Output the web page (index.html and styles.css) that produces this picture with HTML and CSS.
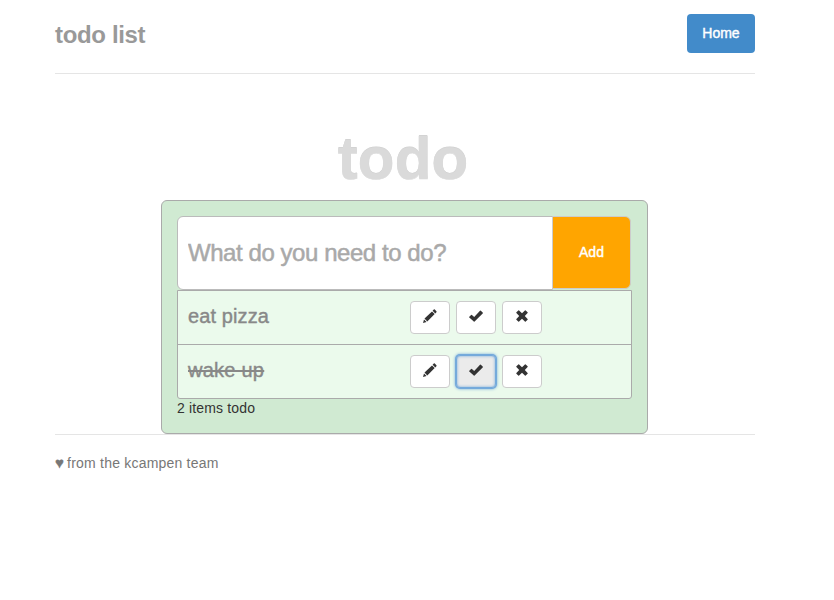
FILE: index.html
```html
<!DOCTYPE html>
<html lang="en">
<head>
<meta charset="utf-8">
<title>todo list</title>
<link rel="stylesheet" href="styles.css">
</head>
<body>
<svg width="0" height="0" class="sprite" aria-hidden="true">
  <symbol id="pencil" viewBox="0 0 14 14"><path d="M0 14l1-3.600 2.600 2.600zM1.500 9.600L9 2.400l2.700 2.600-7.400 7.400zM9.600 1.800l1.200-1.200q.5-.5 1 0l1.600 1.600q.5.5 0 1L12.300 4.400z"/></symbol>
  <symbol id="check" viewBox="0 0 14 12"><path d="M.3 6.800l1.800-1.800q.4-.4.8 0l2.300 2L11 .700q.4-.4.8 0l1.900 1.900q.4.4 0 .8l-8.100 8.100q-.4.4-.8 0L.3 7.600q-.4-.4 0-.8z"/></symbol>
  <symbol id="cross" viewBox="0 0 12 12"><path d="M3.100.4L6 3.200 8.900.4q.4-.4.8 0l1.900 1.900q.4.4 0 .8L8.800 6l2.800 2.900q.4.4 0 .8l-1.900 1.900q-.4.4-.8 0L6 8.800l-2.900 2.800q-.4.4-.8 0L.4 9.700q-.4-.4 0-.8L3.200 6 .4 3.100q-.4-.4 0-.8L2.300.4q.4-.4.8 0z"/></symbol>
</svg>
<div class="container">
  <header class="header">
    <h3 class="brand">todo list</h3>
    <a class="home">Home</a>
  </header>
  <main>
    <h1 class="title">todo</h1>
    <section class="panel">
      <form class="new-item">
        <input class="field" type="text" placeholder="What do you need to do?">
        <button class="add" type="button">Add</button>
      </form>
      <ul class="items">
        <li class="item">
          <span class="label">eat pizza</span>
          <button class="btn" type="button" aria-label="Edit"><svg width="14" height="14"><use href="#pencil"/></svg></button>
          <button class="btn" type="button" aria-label="Done"><svg width="14" height="12"><use href="#check"/></svg></button>
          <button class="btn" type="button" aria-label="Remove"><svg width="12" height="12"><use href="#cross"/></svg></button>
        </li>
        <li class="item">
          <span class="label done">wake up</span>
          <button class="btn" type="button" aria-label="Edit"><svg width="14" height="14"><use href="#pencil"/></svg></button>
          <button class="btn focused" type="button" aria-label="Done"><svg width="14" height="12"><use href="#check"/></svg></button>
          <button class="btn" type="button" aria-label="Remove"><svg width="12" height="12"><use href="#cross"/></svg></button>
        </li>
      </ul>
      <p class="count">2 items todo</p>
    </section>
  </main>
  <footer class="footer"><span class="heart">♥</span> from the kcampen team</footer>
</div>
</body>
</html>
```
FILE: styles.css
```css
* { box-sizing: border-box; }
body {
  margin: 0;
  background: #fff;
  color: #333;
  font: 14px/20px "Liberation Sans", Arial, sans-serif;
}
.sprite { position: absolute; }
.container { width: 700px; margin-left: 55px; }
.header {
  display: flex;
  justify-content: space-between;
  align-items: flex-start;
  height: 74px;
  padding-top: 14px;
  border-bottom: 1px solid #e5e5e5;
}
.brand {
  margin: 1px 0 0;
  color: #999;
  font-size: 24px;
  line-height: 40px;
  letter-spacing: -0.35px;
}
.home {
  width: 68px;
  height: 39px;
  border-radius: 4px;
  background: #428bca;
  color: #fff;
  line-height: 38px;
  text-align: center;
  -webkit-text-stroke: 0.4px #fff;
}
.title {
  margin: 50px 0 0;
  padding-right: 4px;
  height: 76px;
  color: #dadada;
  font-size: 60px;
  line-height: 70px;
  letter-spacing: 0.2px;
  text-align: center;
  text-shadow: 0 -1px 0 #d0d0d0;
  -webkit-text-stroke: 0.6px #dadada;
}
.panel {
  width: 487px;
  height: 234px;
  margin-left: 106px;
  padding: 15px;
  border: 1px solid #aaa;
  border-radius: 6px;
  background: #d0ead2;
}
.new-item { display: flex; align-items: flex-start; margin: 0; height: 74px; }
.field {
  width: 376px;
  height: 74px;
  padding: 0 10px;
  border: 1px solid #bbb;
  border-radius: 6px 0 0 6px;
  background: #fff;
  font: 24px "Liberation Sans", Arial, sans-serif;
  letter-spacing: -0.44px;
}
.field::placeholder { color: #a9a9a9; -webkit-text-stroke: 0.5px #a9a9a9; }
.add {
  width: 79px;
  height: 73px;
  margin-left: -1px;
  padding: 0 0 2px;
  border: 1px solid #ccc;
  border-radius: 0 6px 6px 0;
  background: orange;
  color: #fff;
  font: 14px "Liberation Sans", Arial, sans-serif;
  -webkit-text-stroke: 0.4px #fff;
}
.items {
  width: 455px;
  margin: 0;
  padding: 0;
  border: 1px solid #aaa;
  border-radius: 0 0 3px 3px;
  background: #ebfaec;
  list-style: none;
}
.item { display: flex; gap: 6px; height: 53px; padding: 10px; }
.item + .item { height: 54px; border-top: 1px solid #aaa; }
.label {
  width: 216px;
  color: #888;
  font-size: 20px;
  line-height: 31px;
  letter-spacing: 0.1px;
  -webkit-text-stroke: 0.4px #888;
}
.done { letter-spacing: 0.25px; text-decoration: line-through 2px; }
.btn {
  display: flex;
  justify-content: center;
  align-items: center;
  width: 40px;
  height: 33px;
  padding: 0 0 3px;
  border: 1px solid #ccc;
  border-radius: 4px;
  background: #fff;
  color: #333;
}
.btn svg { fill: currentColor; }
.focused {
  border-color: #75aadb;
  background: #ebebeb;
  box-shadow: 0 0 0 1px #75aadb, 0 0 3px 1px #75aadb, inset 0 0 3px #75aadb;
}
.count { margin: 0; line-height: 19px; letter-spacing: 0.16px; }
.footer {
  height: 50px;
  padding-top: 18px;
  border-top: 1px solid #e5e5e5;
  color: #777;
  letter-spacing: 0.21px;
}
.heart { display: inline-block; width: 8px; letter-spacing: 0; font-size: 15px; -webkit-text-stroke: 0.3px #777; }
```
